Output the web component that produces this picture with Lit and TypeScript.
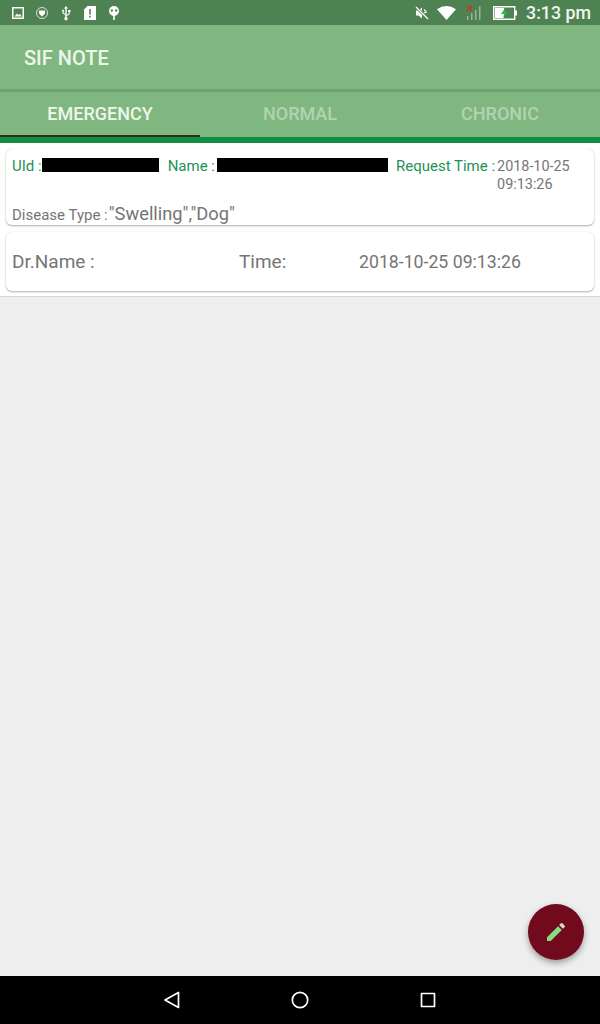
import { LitElement, css, html, svg } from 'lit';
import { customElement, state } from 'lit/decorators.js';

const TABS = ['EMERGENCY', 'NORMAL', 'CHRONIC'];

const leftIcons = [
  svg`<path fill-rule="evenodd" d="M1 2h12v12H1zM2.500 3.500v9h9v-9z"/><path d="M3.500 11.500l2.500-3 1.500 1.500 1.500-1 2 2.500z"/>`,
  svg`<circle cx="7" cy="8" r="5.500" fill="none" stroke="#fff" stroke-width="1" opacity=".75"/><path d="M4 5.500h6v3l-3 3-3-3z"/>`,
  svg`<path d="M7 1l2 2.500H7.700V10l2-1.500V7H9V5h2.500v2h-.7v2l-3.100 2.300v1a1.600 1.600 0 1 1-1.400 0v-2L3.500 8.300V6.600a1.100 1.100 0 1 1 1.100 0v1.200l1.700 1.400V3.500H5z"/>`,
  svg`<path fill-rule="evenodd" d="M4.500 1H13v14H1V4.500zM6.200 4v5.500h1.600V4zm0 6.800v1.700h1.600v-1.700z"/>`,
  svg`<path fill-rule="evenodd" d="M7 1a5 5 0 0 1 5 5c0 2.600-1.900 4.600-4.200 4.900V15H6.200v-4.100C3.900 10.600 2 8.600 2 6a5 5 0 0 1 5-5zM4.800 4.300a1.200 1.200 0 1 0 0 2.400 1.200 1.200 0 0 0 0-2.400zm4.400 0a1.200 1.200 0 1 0 0 2.400 1.200 1.200 0 0 0 0-2.400z"/>`,
];

@customElement('app-root')
export class AppRoot extends LitElement {
  @state()
  private active = 0;

  private statusBar() {
    return html`
      <div class="status">
        <div class="status-left">
          ${leftIcons.map((icon) => html`<svg class="icon" width="14" height="16" viewBox="0 0 14 16" fill="#fff">${icon}</svg>`)}
        </div>
        <div class="status-right">
          <svg width="16" height="16" viewBox="0 0 16 16" fill="#fff">
            <path d="M2 5.500h2.500L8 2.500v11L4.500 10.500H2z" />
            <path d="M10 4.500a5 5 0 0 1 2.500 3.500M10 7a2 2 0 0 1 .8 1.500" fill="none" stroke="#fff" stroke-width="1.200" />
            <path d="M2 2l12 12" stroke="#4f8253" stroke-width="2.600" />
            <path d="M2 2l12 12" stroke="#fff" stroke-width="1.300" />
          </svg>
          <svg class="wifi" width="19" height="14" viewBox="0 0 19 14" fill="#fff"><path d="M0 3.200Q9.500-3 19 3.200L9.500 14z" /></svg>
          <svg class="signal" width="16" height="16" viewBox="0 0 16 16">
            <path d="M1 11h1.500v4H1zM5 8h1.500v7H5zM9 5h1.500v10H9zM13 1h1.500v14H13z" fill="#fff" opacity=".4" />
            <path d="M1 1l5 5M6 1L1 6" stroke="#c0392b" stroke-width="1.500" />
          </svg>
          <svg class="battery" width="24" height="14" viewBox="0 0 24 14">
            <path d="M.7.700h21v12.600H.7z" fill="none" stroke="#fff" stroke-width="1.400" />
            <path d="M22 4.500h2v5h-2z" fill="#fff" />
            <path d="M2 2h9v10H2z" fill="#fff" />
            <path d="M12.500 1.500L8 8h3l-.8 4.500L15 6h-3z" fill="#2fb544" />
          </svg>
          <span class="clock">3:13 pm</span>
        </div>
      </div>
    `;
  }

  render() {
    return html`
      ${this.statusBar()}
      <header class="appbar">SIF NOTE</header>
      <nav class="tabs">
        ${TABS.map(
          (tab, i) => html`<button type="button" class=${i === this.active ? 'on' : ''} @click=${() => (this.active = i)}>${tab}</button>`
        )}
      </nav>
      <main>
        <section class="list">
          <article class="card request">
            <div class="top">
              <span class="label uid-label">UId :</span><i class="redact uid"></i>
              <span class="label name-label">Name :</span><i class="redact name"></i>
              <span class="label time-label">Request Time :</span>
              <span class="value stamp">2018-10-25 09:13:26</span>
            </div>
            <div class="disease"><span class="small">Disease Type :</span><span class="big">"Swelling","Dog"</span></div>
          </article>
          <article class="card doctor">
            <span class="dr">Dr.Name :</span>
            <span class="time">Time:</span>
            <span class="when">2018-10-25 09:13:26</span>
          </article>
        </section>
        <button type="button" class="fab" aria-label="Write">
          <svg width="24" height="24" viewBox="0 0 24 24">
            <path d="M3 17.250V21h3.750L17.810 9.940l-3.750-3.750z" fill="#86dc7e" />
            <path d="M20.710 7.040a1 1 0 0 0 0-1.410l-2.340-2.340a1 1 0 0 0-1.410 0l-1.830 1.830 3.750 3.750z" fill="#e8cfc0" />
          </svg>
        </button>
      </main>
      <footer class="nav">
        <svg width="18" height="18" viewBox="0 0 18 18" fill="none" stroke="#fff" stroke-width="1.700"><path d="M15.500 1.500v15L2 9z" stroke-linejoin="round" /></svg>
        <svg width="18" height="18" viewBox="0 0 18 18" fill="none" stroke="#fff" stroke-width="1.700"><circle cx="9" cy="9" r="7.700" /></svg>
        <svg width="18" height="18" viewBox="0 0 18 18" fill="none" stroke="#fff" stroke-width="1.700"><path d="M2.500 2.500h13v13h-13z" stroke-linejoin="round" /></svg>
      </footer>
    `;
  }

  static styles = css`
    :host {
      display: flex;
      flex-direction: column;
      height: 1024px;
      background: #eeeeee;
      font-family: Roboto, 'Liberation Sans', sans-serif;
    }

    .status {
      flex: none;
      height: 25px;
      display: flex;
      align-items: center;
      justify-content: space-between;
      padding: 0 9px 0 11px;
      background: #4f8253;
    }

    .status-left {
      display: flex;
      gap: 10px;
    }

    .status-right {
      display: flex;
      align-items: center;
    }

    .wifi {
      margin-left: 7px;
    }

    .signal {
      margin-left: 10px;
    }

    .battery {
      margin-left: 11px;
    }

    .clock {
      margin-left: 9px;
      font-size: 17.800px;
      font-weight: 500;
      color: #f0f5f0;
    }

    .appbar {
      flex: none;
      height: 64px;
      display: flex;
      align-items: center;
      padding: 2px 0 0 24px;
      box-sizing: border-box;
      background: #80b780;
      color: #eef6ea;
      font-size: 20px;
      font-weight: 500;
    }

    .tabs {
      flex: none;
      display: flex;
      height: 48px;
      box-sizing: border-box;
      background: #80b780;
      border-top: 3px solid #6fa170;
    }

    .tabs button {
      flex: 1;
      padding: 0 0 1px;
      border: 0;
      border-bottom: 2px solid transparent;
      background: none;
      font: 500 18px Roboto, 'Liberation Sans', sans-serif;
      color: #b3d3b0;
    }

    .tabs button.on {
      color: #eef6ea;
      border-bottom-color: #3a2a12;
    }

    main {
      position: relative;
      flex: 1;
      min-height: 0;
    }

    .list {
      display: flex;
      flex-direction: column;
      gap: 7px;
      padding: 6px 6px 5px;
      background: #ffffff;
      border-top: 6px solid #0f8f46;
      border-bottom: 1px solid #d6d6d6;
    }

    .card {
      box-sizing: border-box;
      border-radius: 6px;
      background: #ffffff;
      box-shadow: 0 1px 2px rgba(0, 0, 0, 0.3), 0 0 1px rgba(0, 0, 0, 0.15);
      color: #757575;
    }

    .request {
      height: 76px;
      padding: 8px 6px 0;
    }

    .top {
      display: flex;
      align-items: flex-start;
      height: 46px;
      font-size: 15px;
      line-height: 18px;
    }

    .label {
      color: #1f9157;
      white-space: nowrap;
    }

    .redact {
      flex: none;
      height: 14px;
      margin-top: 1px;
      background: #000000;
    }

    .uid {
      width: 117px;
    }

    .name {
      width: 171px;
      margin-left: 2px;
    }

    .name-label {
      margin-left: 9px;
    }

    .time-label {
      margin-left: 8px;
    }

    .stamp {
      width: 90px;
      margin: 1px 0 0 2px;
      font-size: 14.400px;
    }

    .disease {
      display: flex;
      align-items: baseline;
      height: 22px;
      white-space: nowrap;
    }

    .small {
      font-size: 15px;
    }

    .big {
      margin-left: 1px;
      font-size: 18.300px;
    }

    .doctor {
      height: 59px;
      display: flex;
      align-items: center;
      padding: 0 6px;
      font-size: 19px;
      white-space: nowrap;
    }

    .dr {
      width: 227px;
    }

    .time {
      width: 120px;
    }

    .when {
      font-size: 17.700px;
    }

    .fab {
      position: absolute;
      right: 16px;
      bottom: 16px;
      width: 56px;
      height: 56px;
      display: flex;
      align-items: center;
      justify-content: center;
      padding: 0;
      border: 0;
      border-radius: 50%;
      background: #700a1c;
      box-shadow: 0 3px 6px rgba(0, 0, 0, 0.35);
    }

    .nav {
      flex: none;
      height: 48px;
      display: flex;
      align-items: center;
      justify-content: center;
      gap: 110px;
      background: #000000;
    }
  `;
}
